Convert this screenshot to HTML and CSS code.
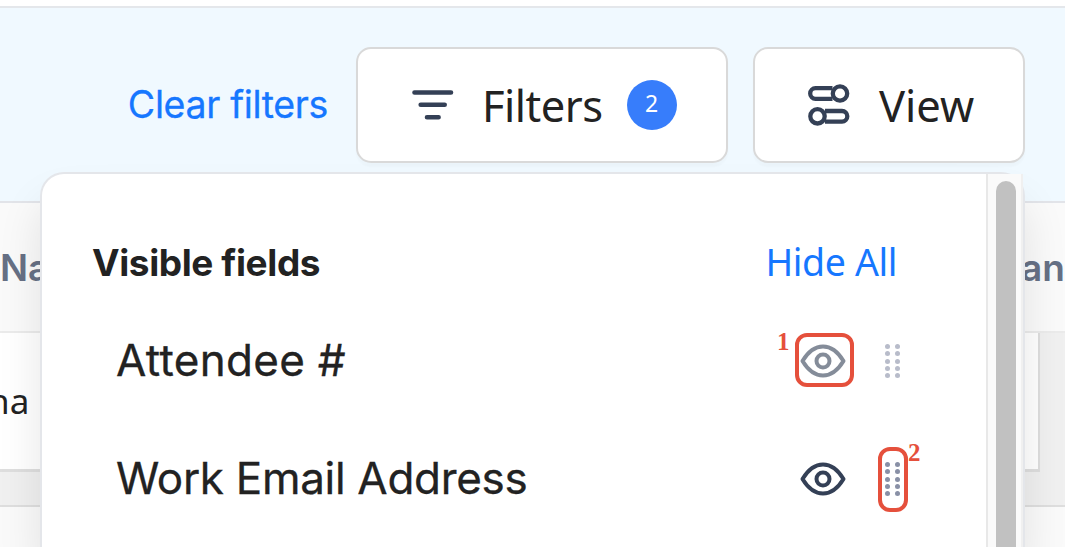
FILE: index.html
```html
<!DOCTYPE html>
<html lang="en">
<head>
  <meta charset="UTF-8" />
  <meta name="viewport" content="width=device-width, initial-scale=1.0">
  <title>Attendees</title>
  <link rel="stylesheet" href="styles.css">
</head>
<body>

  <div class="toolbar">
    <a class="clear-link">Clear filters</a>
    <button class="btn filters-btn">
      <svg class="filter-icon" width="42" height="32" viewBox="0 0 42 32" fill="none" stroke="#344056" stroke-width="4.6" stroke-linecap="round">
        <path d="M2.5 3.5H39M8.7 15.8H32.7M15 28.2H26.6" />
      </svg>
      <span class="btn-text">Filters</span>
      <span class="badge">2</span>
    </button>
    <button class="btn view-btn">
      <svg class="view-icon" width="42" height="42" viewBox="0 0 42 42" fill="none" stroke="#344056" stroke-width="4.3">
        <path d="M24.5 4.2H7.5a5.3 5.3 0 0 0 0 10.6H24.5M17 27H34a5.3 5.3 0 0 1 0 10.6H17" />
        <circle cx="32" cy="9.5" r="7.2" />
        <circle cx="9.5" cy="32.3" r="7.2" />
      </svg>
      <span class="btn-text">View</span>
    </button>
  </div>

  <div class="table">
    <div class="table-head">
      <span>Na</span>
      <span>an</span>
    </div>
    <div class="table-row">
      <div class="cell">na</div>
    </div>
    <div class="table-foot"></div>
  </div>

  <!-- View dropdown -->
  <div class="dropdown">
    <div class="fields">
      <div class="fields-head">
        <span class="title">Visible fields</span>
        <a class="hide-all">Hide All</a>
      </div>
      <div class="field muted">
        <span class="field-name wide">Attendee #</span>
        <span class="icon-wrap">
          <svg width="46" height="34" viewBox="0 0 46 34" fill="none" stroke="#344056" stroke-width="4">
            <path d="M2.5 17C8 8 14 2.5 23 2.5S38 8 43.5 17C38 26 32 31.5 23 31.5S8 26 2.5 17Z" stroke-linejoin="round" />
            <circle cx="23" cy="17" r="6.5" />
          </svg>
          <span class="mark mark-eye"><b>1</b></span>
        </span>
        <span class="icon-wrap drag">
          <i></i><i></i><i></i><i></i><i></i><i></i><i></i><i></i><i></i><i></i>
        </span>
      </div>
      <div class="field">
        <span class="field-name">Work Email Address</span>
        <span class="icon-wrap">
          <svg width="46" height="34" viewBox="0 0 46 34" fill="none" stroke="#344056" stroke-width="4">
            <path d="M2.5 17C8 8 14 2.5 23 2.5S38 8 43.5 17C38 26 32 31.5 23 31.5S8 26 2.5 17Z" stroke-linejoin="round" />
            <circle cx="23" cy="17" r="6.5" />
          </svg>
        </span>
        <span class="icon-wrap drag">
          <i></i><i></i><i></i><i></i><i></i><i></i><i></i><i></i><i></i><i></i>
          <span class="mark mark-drag"><b>2</b></span>
        </span>
      </div>
    </div>
    <div class="scrollbar">
      <div class="thumb"></div>
    </div>
  </div>

</body>
</html>
```
FILE: styles.css
```css
* {
  box-sizing: border-box;
}

body {
  margin: 0;
  padding-top: 6px;
  height: 547px;
  overflow: hidden;
  position: relative;
  font-family: Inter, sans-serif;
  color: #222;
  background: #fff;
}

.toolbar {
  height: 197px;
  padding: 39px 40px 0 0;
  display: flex;
  justify-content: flex-end;
  align-items: flex-start;
  background: #f0f9ff;
  border-top: 2px solid #e4e7eb;
  border-bottom: 2px solid #e2e4e9;
}

.clear-link {
  margin-right: 28px;
  font-size: 37.5px;
  letter-spacing: -0.35px;
  line-height: 116px;
  color: #1677ff;
  -webkit-text-stroke: 0.3px;
}

.btn {
  height: 116px;
  padding: 0;
  display: flex;
  align-items: center;
  font-family: "Noto Sans", sans-serif;
  font-size: 43.5px;
  line-height: 60px;
  color: #222;
  background: #fff;
  border: 2px solid #d9d9d9;
  border-radius: 15px;
  box-shadow: 0 4px 2px rgba(0, 0, 0, 0.02);
}

.btn-text {
  padding-bottom: 1px;
}

.filters-btn {
  width: 372px;
  margin-right: 25px;
  padding-left: 54px;
  letter-spacing: -0.5px;
}

.filter-icon {
  margin-right: 28px;
}

.badge {
  width: 50px;
  height: 50px;
  margin-left: 24px;
  border-radius: 50%;
  background: #377dfb;
  color: #fff;
  font-size: 23px;
  line-height: 46px;
  letter-spacing: 0;
  text-align: center;
}

.view-btn {
  width: 272px;
  padding-left: 53px;
}

.view-icon {
  margin-right: 29px;
}

/* Table behind the dropdown */
.table-head {
  height: 130px;
  display: flex;
  justify-content: space-between;
  font-size: 37px;
  font-weight: 600;
  line-height: 130px;
  color: #667085;
  background: #fafafa;
  border-bottom: 2px solid #ebebeb;
}

.table-row {
  height: 174px;
  background: #f0f0f0;
  border-bottom: 2px solid #dedede;
}

.cell {
  width: 1040px;
  height: 139px;
  font-family: "Noto Sans", sans-serif;
  font-size: 35px;
  line-height: 136px;
  text-indent: -12px;
  background: #fff;
  border-right: 2px solid #dedede;
  border-bottom: 3px solid #dedede;
}

.table-foot {
  height: 40px;
  background: #fafafa;
}

/* Dropdown */
.dropdown {
  position: absolute;
  top: 172px;
  left: 40px;
  width: 985px;
  height: 375px;
  display: flex;
  background: #fff;
  border: 2px solid #e4e6ea;
  border-bottom: 0;
  border-radius: 24px 24px 0 0;
  box-shadow: 0 30px 44px rgba(0, 0, 0, 0.1);
}

.fields {
  flex: 1;
  padding: 30px 84px 0 50px;
}

.fields-head {
  height: 118px;
  padding: 0 5px 2px 0;
  display: flex;
  align-items: center;
  justify-content: space-between;
}

.title {
  font-size: 37px;
  font-weight: 700;
  letter-spacing: -0.4px;
}

.hide-all {
  padding-bottom: 2px;
  font-family: "Noto Sans", sans-serif;
  font-size: 37.5px;
  letter-spacing: -0.4px;
  color: #1677ff;
}

.field {
  height: 118px;
  margin-top: -20px;
  margin-bottom: 20px;
  padding-left: 24px;
  display: flex;
  align-items: center;
}

.field-name {
  flex: 1;
  padding-bottom: 2px;
  font-size: 44px;
  letter-spacing: -0.3px;
  -webkit-text-stroke: 0.3px;
}

.field-name.wide {
  letter-spacing: 0.3px;
}

.icon-wrap {
  position: relative;
  display: flex;
}

.muted svg {
  opacity: 0.6;
}

.drag {
  width: 17px;
  margin-left: 39px;
  display: grid;
  grid-template-columns: 5px 5px;
  gap: 2.4px 5px;
}

.drag i {
  width: 5px;
  height: 5px;
  border-radius: 50%;
  background: #8990a6;
}

.muted .drag i {
  background: #b8bcca;
}

/* Numbered callouts */
.mark {
  position: absolute;
  border: 4px solid #e5503c;
  border-radius: 12px;
  color: #e5503c;
  font-family: "Liberation Serif", serif;
  font-size: 25px;
  line-height: 25px;
}

.mark b {
  position: absolute;
}

.mark-eye {
  top: -11px;
  left: -5px;
  width: 59px;
  height: 54px;
}

.mark-eye b {
  top: -8px;
  left: -22px;
}

.mark-drag {
  top: -15px;
  left: -7px;
  width: 30px;
  height: 65px;
}

.mark-drag b {
  top: -11px;
  left: 26px;
}

.scrollbar {
  width: 37px;
  padding: 7px 0 0 8px;
  background: #fafafa;
  border-left: 2px solid #e8e8e8;
  border-right: 2px solid #f0f0f0;
}

.thumb {
  width: 20px;
  height: 100%;
  border-radius: 10px 10px 0 0;
  background: #c1c1c1;
}
```
